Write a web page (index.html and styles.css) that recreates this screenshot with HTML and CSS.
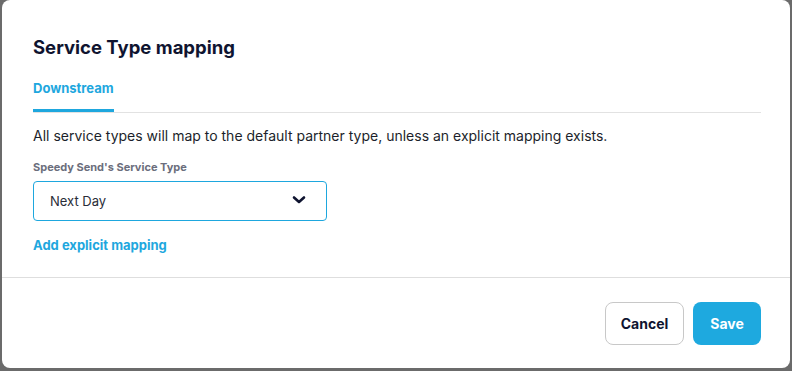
FILE: index.html
```html
<!DOCTYPE html>
<html lang="en">
<head>
    <meta charset="UTF-8">
    <meta name="viewport" content="width=device-width, initial-scale=1.0">
    <title>Service Type mapping</title>
    <link rel="stylesheet" href="styles.css">
</head>
<body>
    <div class="modal">
        <div class="modal-main">
            <h2 class="modal-title">Service Type mapping</h2>

            <div class="tabs">
                <a href="#" class="tab active">Downstream</a>
            </div>

            <p class="hint">All service types will map to the default partner type, unless an explicit mapping exists.</p>

            <label class="field-label">Speedy Send's Service Type</label>
            <div class="select">
                <span>Next Day</span>
                <svg width="14" height="10" viewBox="0 0 14 10">
                    <polyline points="2,2.5 7,7 12,2.5" fill="none" stroke="#0f1430" stroke-width="2.6" stroke-linecap="round" stroke-linejoin="round"/>
                </svg>
            </div>

            <a href="#" class="add-link">Add explicit mapping</a>
        </div>

        <div class="modal-footer">
            <button class="btn btn-cancel">Cancel</button>
            <button class="btn btn-save">Save</button>
        </div>
    </div>
</body>
</html>
```

FILE: styles.css
```css
*{
    margin:0;
    padding:0;
    box-sizing: border-box;
}
body{
    background-color: #6b6b6b;
    font-family: Inter, Roboto, "Liberation Sans", sans-serif;
    padding: 0 2px 3px 2px;
    height: 371px;
    overflow: hidden;
}
.modal{
    width: 788px;
    height: 368px;
    background: #fff;
    border-radius: 8px;
    display: flex;
    flex-direction: column;
}
.modal-main{
    padding: 35px 29px 24px 31px;
    display: flex;
    flex-direction: column;
    align-items: flex-start;
    border-bottom: 1px solid #dedede;
}
.modal-title{
    font-size: 18.5px;
    line-height: 24px;
    font-weight: 700;
    color: #0f1430;
}
.tabs{
    margin-top: 21px;
    width: 100%;
    display: flex;
    border-bottom: 1px solid #e2e2e2;
}
.tab{
    font-size: 13px;
    line-height: 16px;
    font-weight: 700;
    color: #1ea7de;
    text-decoration: none;
    padding-bottom: 13px;
    border-bottom: 3px solid #1ea7de;
}
.hint{
    margin-top: 14px;
    font-size: 14px;
    line-height: 18px;
    color: #1c1f2b;
}
.field-label{
    margin-top: 15px;
    font-size: 11px;
    line-height: 14px;
    font-weight: 700;
    color: #6b6e7c;
}
.select{
    margin-top: 7px;
    width: 294px;
    height: 40px;
    border: 1px solid #1ea7de;
    border-radius: 4px;
    padding: 0 20px 0 16px;
    display: flex;
    align-items: center;
    justify-content: space-between;
    font-size: 13px;
    color: #2a2d38;
}
.select svg{
    margin-top: -3px;
}
.add-link{
    margin-top: 16px;
    font-size: 13px;
    line-height: 16px;
    font-weight: 700;
    color: #1ea7de;
    text-decoration: none;
}
.modal-footer{
    padding: 24px 29px 0 0;
    display: flex;
    justify-content: flex-end;
    gap: 9px;
}
.btn{
    height: 43px;
    border-radius: 8px;
    font-family: Inter, Roboto, "Liberation Sans", sans-serif;
    font-size: 14px;
    font-weight: 700;
    cursor: pointer;
}
.btn-cancel{
    width: 79px;
    background: #fff;
    border: 1px solid #c8c8c8;
    color: #0f1430;
}
.btn-save{
    width: 68px;
    background: #1ea9df;
    border: none;
    color: #fff;
}
```
